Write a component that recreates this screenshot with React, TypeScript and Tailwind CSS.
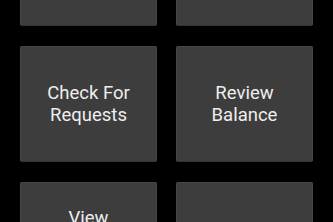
const TILES = [
  ['Send', 'Payment'],
  ['Request', 'Payment'],
  ['Check For', 'Requests'],
  ['Review', 'Balance'],
  ['View', 'Pending', 'Payments'],
  ['Settings'],
]

export default function App() {
  return (
    <div className="h-[222px] w-[333px] overflow-hidden bg-black" style={{ fontFamily: 'Roboto, "Liberation Sans", sans-serif' }}>
      <div className="mt-[-90px] grid grid-cols-2 gap-x-[19px] gap-y-[20px] px-[20px]">
        {TILES.map((lines, i) => (
          <button
            key={i}
            className="flex h-[116px] flex-col items-center justify-center rounded-[2px] border border-[#474747] border-b-[#343434] bg-[#3d3d3d] text-[18.5px] leading-[22px] text-[#eeeeee]"
          >
            {lines.map((l) => (
              <span key={l}>{l}</span>
            ))}
          </button>
        ))}
      </div>
    </div>
  )
}
